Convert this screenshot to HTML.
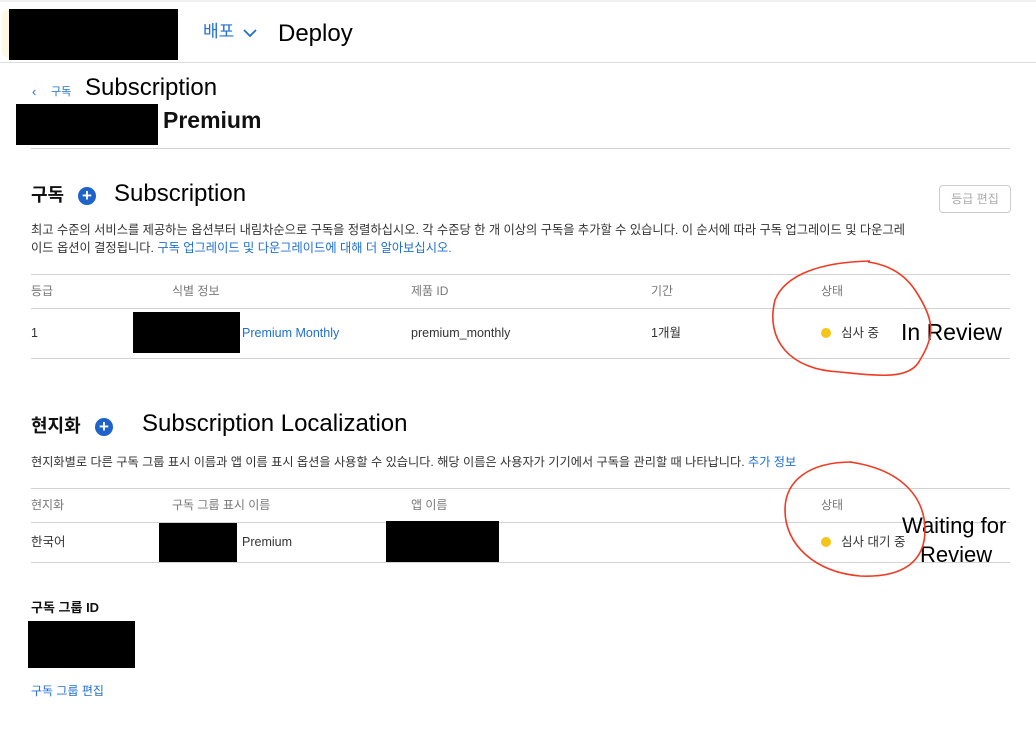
<!DOCTYPE html>
<html><head><meta charset="utf-8"><style>
body{margin:0;width:1036px;height:735px;background:#fff;position:relative;overflow:hidden;font-family:"Liberation Sans","Noto Sans CJK KR",sans-serif;color:#333}
div,span{position:absolute;white-space:nowrap}
.b{background:#000}
.g{color:#777;font-size:12px;line-height:16px}
.l{position:absolute;left:31px;width:979px;height:1px;background:#d2d2d2}
.t{font-size:12.5px;color:#333;line-height:16px}
.blue{color:#1f6fd1}
.big{font-size:24px;color:#000;line-height:28px}
.plus{width:18px;height:18px;border-radius:50%;background:#1e63c9;color:#fff;font-size:17px;line-height:17px;text-align:center;font-weight:bold}
.dot{width:10px;height:10px;border-radius:50%;background:#f5c518}
</style></head><body>
<div style="left:0;top:0;width:1036px;height:2px;background:#f0f0f0"></div>
<div style="left:2px;top:10px;width:12px;height:48px;background:#fdf8e6;border-radius:6px"></div>
<div class="b" style="left:9px;top:9px;width:169px;height:51px"></div>
<div class="blue" style="left:203px;top:21px;font-size:17px;line-height:22px">배포</div>
<svg style="position:absolute;left:242px;top:28px" width="16" height="10"><path d="M2 2 L8 8 L14 2" stroke="#1f6fd1" stroke-width="1.8" fill="none"/></svg>
<div class="big" style="left:278px;top:20px">Deploy</div>
<div style="left:0;top:62px;width:1036px;height:1px;background:#ddd"></div>
<div class="blue" style="left:32px;top:84px;font-size:13px;line-height:16px">‹</div>
<div class="blue" style="left:51px;top:85px;font-size:11px;line-height:14px">구독</div>
<div class="big" style="left:85px;top:74px">Subscription</div>
<div class="b" style="left:16px;top:104px;width:142px;height:41px"></div>
<div style="left:163px;top:106px;font-size:23px;line-height:28px;font-weight:bold;color:#111">Premium</div>
<div class="l" style="top:148px"></div>
<div style="left:31px;top:183px;font-size:18px;line-height:24px;font-weight:bold;color:#111">구독</div>
<div class="plus" style="left:78px;top:187px">+</div>
<div class="big" style="left:114px;top:180px">Subscription</div>
<div style="left:939px;top:185px;width:70px;height:26px;border:1px solid #ccc;border-radius:4px;color:#aaa;font-size:12px;text-align:center;line-height:26px">등급 편집</div>
<div class="t" style="left:31px;top:221px;line-height:18px;font-size:12.25px">최고 수준의 서비스를 제공하는 옵션부터 내림차순으로 구독을 정렬하십시오. 각 수준당 한 개 이상의 구독을 추가할 수 있습니다. 이 순서에 따라 구독 업그레이드 및 다운그레<br>이드 옵션이 결정됩니다. <span class="blue" style="position:static">구독 업그레이드 및 다운그레이드에 대해 더 알아보십시오.</span></div>
<div class="l" style="top:274px"></div>
<div class="g" style="left:31px;top:283px">등급</div>
<div class="g" style="left:172px;top:283px">식별 정보</div>
<div class="g" style="left:411px;top:283px">제품 ID</div>
<div class="g" style="left:651px;top:283px">기간</div>
<div class="g" style="left:821px;top:283px">상태</div>
<div class="l" style="top:308px"></div>
<div class="t" style="left:31px;top:325px">1</div>
<div class="b" style="left:133px;top:312px;width:107px;height:41px"></div>
<div class="t blue" style="left:242px;top:325px">Premium Monthly</div>
<div class="t" style="left:411px;top:325px">premium_monthly</div>
<div class="t" style="left:651px;top:325px">1개월</div>
<div class="dot" style="left:821px;top:328px"></div>
<div class="t" style="left:841px;top:325px">심사 중</div>
<div class="big" style="left:901px;top:318px;font-size:23px">In Review</div>
<div class="l" style="top:358px"></div>
<div style="left:31px;top:414px;font-size:18px;line-height:24px;font-weight:bold;color:#111">현지화</div>
<div class="plus" style="left:95px;top:418px">+</div>
<div class="big" style="left:142px;top:410px">Subscription Localization</div>
<div class="t" style="left:31px;top:454px;font-size:12.2px">현지화별로 다른 구독 그룹 표시 이름과 앱 이름 표시 옵션을 사용할 수 있습니다. 해당 이름은 사용자가 기기에서 구독을 관리할 때 나타납니다. <span class="blue" style="position:static">추가 정보</span></div>
<div class="l" style="top:488px"></div>
<div class="g" style="left:31px;top:497px">현지화</div>
<div class="g" style="left:172px;top:497px">구독 그룹 표시 이름</div>
<div class="g" style="left:411px;top:497px">앱 이름</div>
<div class="g" style="left:821px;top:497px">상태</div>
<div class="l" style="top:522px"></div>
<div class="t" style="left:31px;top:534px">한국어</div>
<div class="b" style="left:159px;top:523px;width:78px;height:39px"></div>
<div class="t" style="left:242px;top:534px">Premium</div>
<div class="b" style="left:386px;top:521px;width:113px;height:41px"></div>
<div class="dot" style="left:821px;top:537px"></div>
<div class="t" style="left:841px;top:534px">심사 대기 중</div>
<div class="big" style="left:902px;top:512px;font-size:22px">Waiting for</div>
<div class="big" style="left:920px;top:541px;font-size:22px">Review</div>
<div class="l" style="top:562px"></div>
<div style="left:31px;top:600px;font-size:13px;line-height:16px;font-weight:bold;color:#111">구독 그룹 ID</div>
<div class="b" style="left:28px;top:621px;width:107px;height:47px"></div>
<div class="blue" style="left:31px;top:683px;font-size:12px;line-height:16px">구독 그룹 편집</div>
<svg style="position:absolute;left:0;top:0" width="1036" height="735">
<path d="M870 261 C820 262 785 275 775 300 C765 340 790 370 840 372 C880 376 910 380 920 360 C935 335 935 320 915 290 C905 275 890 265 868 262" stroke="#f03a22" stroke-width="1.6" fill="none"/>
<path d="M852 462 C810 462 785 480 785 510 C785 545 815 572 860 576 C905 578 925 560 925 530 C925 500 905 470 850 462" stroke="#f03a22" stroke-width="1.6" fill="none"/>
</svg>
</body></html>
